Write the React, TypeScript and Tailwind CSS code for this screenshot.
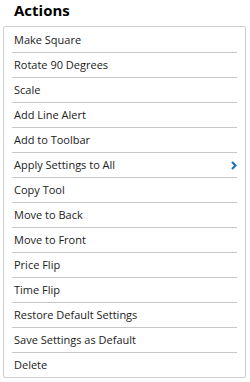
import React from 'react';

const items = [
  'Make Square',
  'Rotate 90 Degrees',
  'Scale',
  'Add Line Alert',
  'Add to Toolbar',
  'Apply Settings to All',
  'Copy Tool',
  'Move to Back',
  'Move to Front',
  'Price Flip',
  'Time Flip',
  'Restore Default Settings',
  'Save Settings as Default',
  'Delete',
];

export default function App() {
  return (
    <div className="w-[250px] h-[382px] bg-white" style={{ fontFamily: '"Open Sans", sans-serif' }}>
      <div className="h-[26px] pl-[14px] text-[15px] font-bold leading-[20px] text-black">Actions</div>
      <div className="mx-[3px] w-[243px] h-[352px] border border-[#cfcfcf] rounded-[2px] pt-[1px]">
        {items.map((label, i) => (
          <div key={label} className="px-[8px]">
            <div
              className={`flex items-center justify-between h-[25px] pl-[2px] pr-0 text-[11px] text-[#222] ${
                i < items.length - 1 ? 'border-b border-[#c8c8c8]' : ''
              }`}
            >
              <span>{label}</span>
              {label === 'Apply Settings to All' && (
                <svg width="6" height="9" viewBox="0 0 6 9">
                  <path d="M1 1 L4.5 4.5 L1 8" stroke="#1a73c8" strokeWidth="2.2" fill="none" />
                </svg>
              )}
            </div>
          </div>
        ))}
      </div>
    </div>
  );
}
